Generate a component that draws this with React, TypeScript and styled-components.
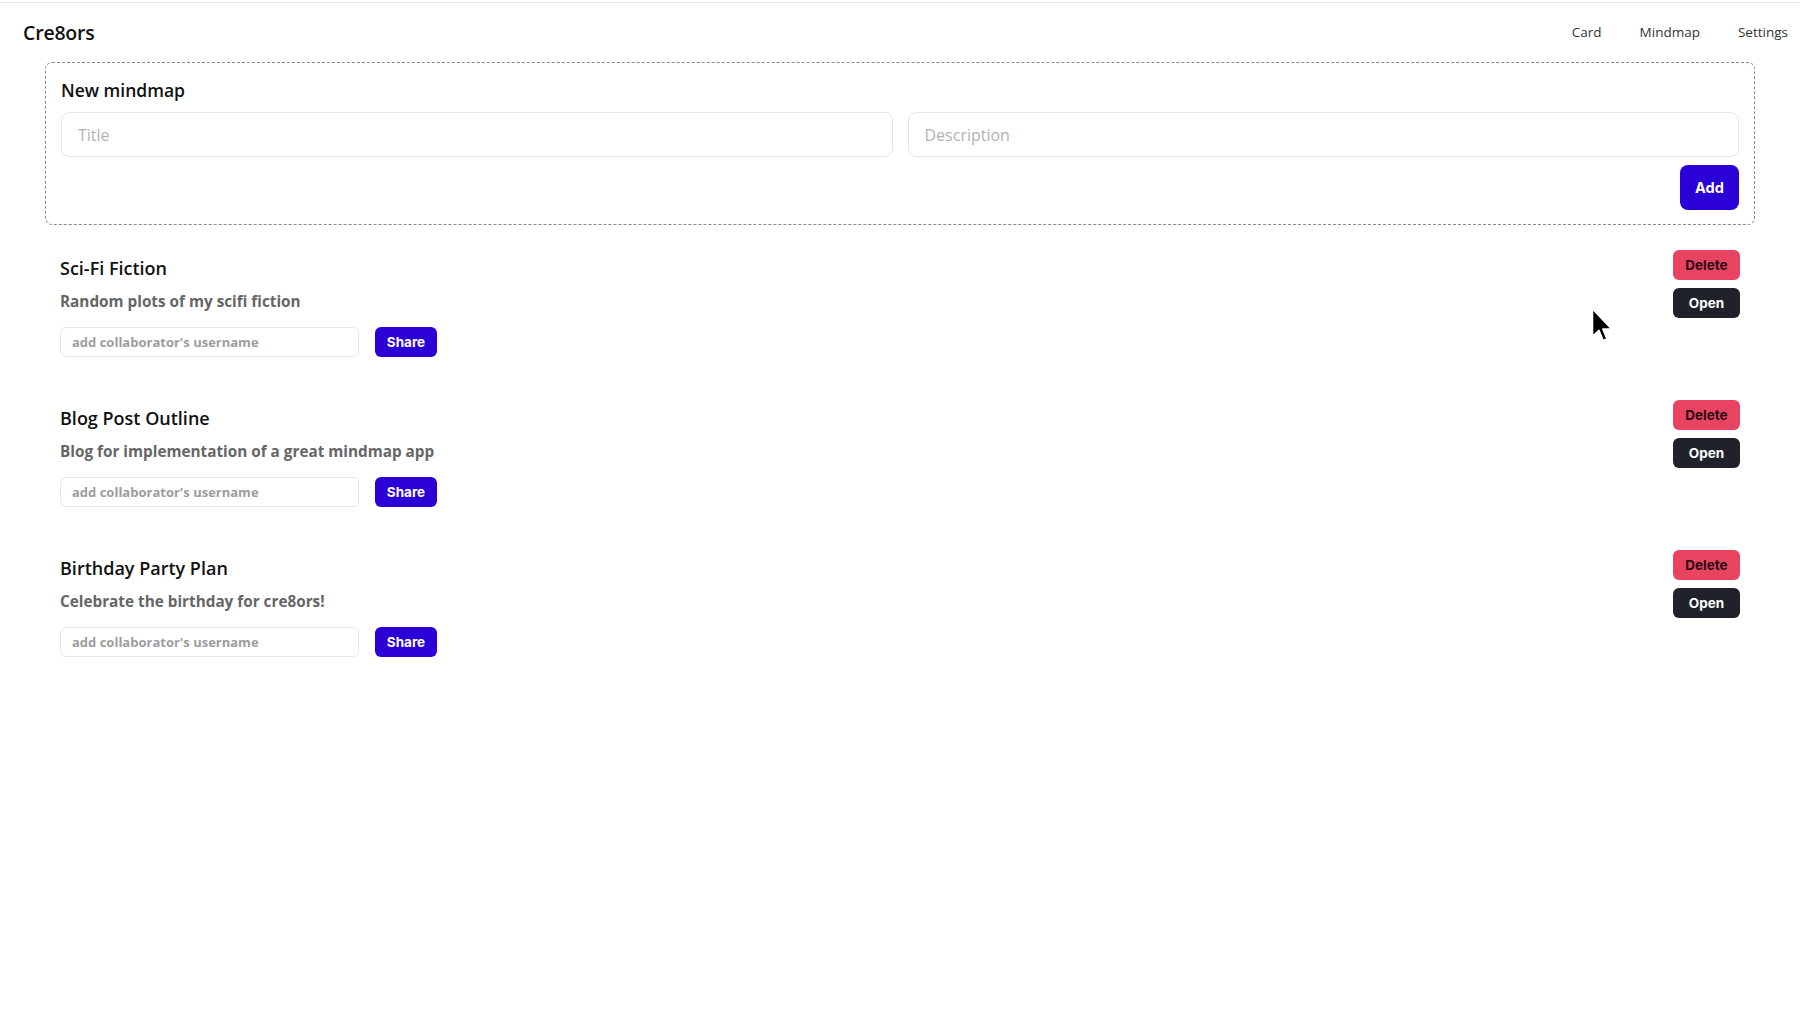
import React from 'react';
import styled, { createGlobalStyle } from 'styled-components';

const GlobalStyle = createGlobalStyle`
  * { box-sizing: border-box; }
  body {
    margin: 0;
    background: #fff;
    font-family: 'Open Sans', 'Noto Sans', Arial, sans-serif;
    color: #111;
  }
`;

const Page = styled.div`
  position: relative;
  min-height: 1013px;
  border-top: 1px solid #ececec;
  margin-top: 2px;
`;

const Header = styled.header`
  display: flex;
  justify-content: space-between;
  align-items: center;
  height: 58px;
  padding: 0 12px 0 23px;
`;

const Logo = styled.div`
  font-size: 19.5px;
  font-weight: 600;
  letter-spacing: -0.2px;
  color: #111;
`;

const Nav = styled.nav`
  display: flex;
  gap: 38px;
  font-size: 13.5px;
  color: #333;
`;

const NavItem = styled.a`
  color: inherit;
  text-decoration: none;
`;

const Main = styled.main`
  padding: 1px 45px 0;
`;

const NewBox = styled.section`
  border: 1px dashed #8a8a8a;
  border-radius: 7px;
  padding: 14px 15px 14px;
  display: flex;
  flex-direction: column;
`;

const BoxTitle = styled.h2`
  margin: 0 0 9px;
  font-size: 17.5px;
  font-weight: 600;
  line-height: 26px;
  color: #111;
`;

const FieldRow = styled.div`
  display: flex;
  gap: 15px;
`;

const BigInput = styled.input`
  flex: 1;
  height: 45px;
  border: 1px solid #e6e6e6;
  border-radius: 8px;
  padding: 0 16px;
  font-family: 'Open Sans', sans-serif;
  font-size: 16px;
  outline: none;
  &::placeholder { color: #b3b3b3; }
`;

const Button = styled.button<{ $tone: 'primary' | 'danger' | 'dark' }>`
  border: none;
  border-radius: 6px;
  font-family: Inter, 'Liberation Sans', sans-serif;
  font-weight: 700;
  font-size: 13.5px;
  cursor: pointer;
  padding: 0;
  background: ${p =>
    p.$tone === 'primary' ? '#2b00d6' : p.$tone === 'danger' ? '#e84462' : '#1f222b'};
  color: ${p => (p.$tone === 'danger' ? '#2a0a12' : '#fff')};
`;

const AddButton = styled(Button)`
  align-self: flex-end;
  margin-top: 8px;
  width: 59px;
  height: 45px;
  border-radius: 8px;
  font-size: 14.5px;
`;

const List = styled.div`
  display: flex;
  flex-direction: column;
  gap: 43px;
  padding: 25px 15px 0;
`;

const Card = styled.div`
  display: flex;
  justify-content: space-between;
  align-items: flex-start;
`;

const CardInfo = styled.div`
  display: flex;
  flex-direction: column;
  padding-top: 6px;
`;

const CardTitle = styled.h3`
  margin: 0;
  font-size: 18px;
  font-weight: 600;
  line-height: 24px;
  color: #111;
`;

const CardDesc = styled.p`
  margin: 9px 0 0;
  font-size: 15.3px;
  font-weight: 700;
  line-height: 24px;
  color: #666;
`;

const ShareRow = styled.div`
  display: flex;
  align-items: center;
  gap: 16px;
  margin-top: 14px;
`;

const SmallInput = styled.input`
  width: 299px;
  height: 30px;
  border: 1px solid #e6e6e6;
  border-radius: 6px;
  padding: 0 11px;
  font-family: 'Open Sans', sans-serif;
  font-weight: 700;
  font-size: 13px;
  outline: none;
  &::placeholder { color: #9d9d9d; }
`;

const ShareButton = styled(Button)`
  width: 62px;
  height: 30px;
`;

const Actions = styled.div`
  display: flex;
  flex-direction: column;
  gap: 8px;
`;

const ActionButton = styled(Button)`
  width: 67px;
  height: 30px;
`;

const Pointer = styled.svg`
  position: absolute;
  left: 1590px;
  top: 304px;
  pointer-events: none;
`;

const mindmaps = [
  { title: 'Sci-Fi Fiction', desc: 'Random plots of my scifi fiction' },
  { title: 'Blog Post Outline', desc: 'Blog for implementation of a great mindmap app' },
  { title: 'Birthday Party Plan', desc: 'Celebrate the birthday for cre8ors!' },
];

export default function App() {
  return (
    <Page>
      <GlobalStyle />
      <Header>
        <Logo>Cre8ors</Logo>
        <Nav>
          <NavItem>Card</NavItem>
          <NavItem>Mindmap</NavItem>
          <NavItem>Settings</NavItem>
        </Nav>
      </Header>

      <Main>
        <NewBox>
          <BoxTitle>New mindmap</BoxTitle>
          <FieldRow>
            <BigInput placeholder="Title" />
            <BigInput placeholder="Description" />
          </FieldRow>
          <AddButton $tone="primary">Add</AddButton>
        </NewBox>

        <List>
          {mindmaps.map(m => (
            <Card key={m.title}>
              <CardInfo>
                <CardTitle>{m.title}</CardTitle>
                <CardDesc>{m.desc}</CardDesc>
                <ShareRow>
                  <SmallInput placeholder="add collaborator's username" />
                  <ShareButton $tone="primary">Share</ShareButton>
                </ShareRow>
              </CardInfo>
              <Actions>
                <ActionButton $tone="danger">Delete</ActionButton>
                <ActionButton $tone="dark">Open</ActionButton>
              </Actions>
            </Card>
          ))}
        </List>
      </Main>

      <Pointer width="24" height="36" viewBox="0 0 12 19">
        <path
          d="M1 1 L1 15.5 L4.4 12.3 L6.6 17.6 L8.6 16.8 L6.4 11.6 L11 11.6 Z"
          fill="#000"
          stroke="#fff"
          strokeWidth="0.8"
          strokeLinejoin="round"
        />
      </Pointer>
    </Page>
  );
}
